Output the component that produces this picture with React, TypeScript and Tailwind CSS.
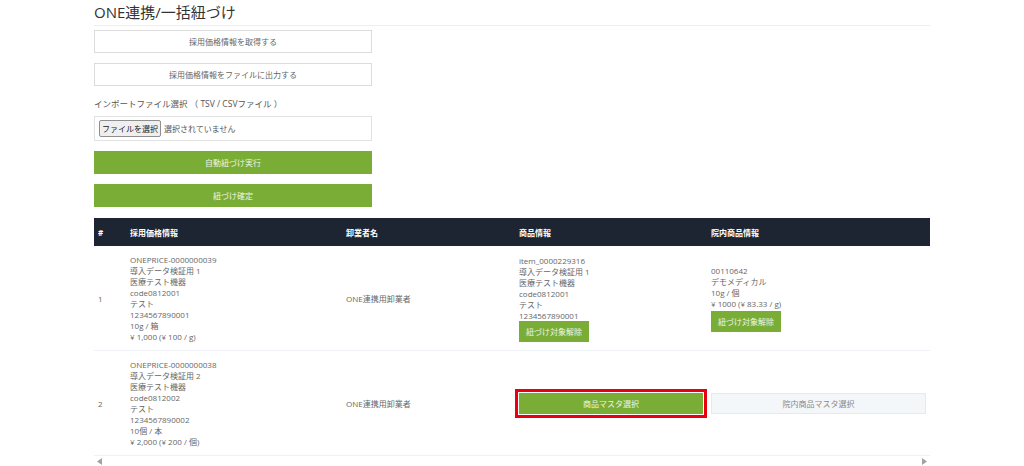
import React from "react";

const font = { fontFamily: '"Open Sans", "Noto Sans CJK JP", sans-serif' };

type Row = {
  no: number;
  price: string[];
  vendor: string;
  item: string[] | null;
  inHouse: string[] | null;
};

const rows: Row[] = [
  {
    no: 1,
    price: [
      "ONEPRICE-0000000039",
      "導入データ検証用 1",
      "医療テスト機器",
      "code0812001",
      "テスト",
      "1234567890001",
      "10g / 箱",
      "¥ 1,000 (¥ 100 / g)",
    ],
    vendor: "ONE連携用卸業者",
    item: [
      "item_0000229316",
      "導入データ検証用 1",
      "医療テスト機器",
      "code0812001",
      "テスト",
      "1234567890001",
    ],
    inHouse: ["00110642", "デモメディカル", "10g / 個", "¥ 1000 (¥ 83.33 / g)"],
  },
  {
    no: 2,
    price: [
      "ONEPRICE-0000000038",
      "導入データ検証用 2",
      "医療テスト機器",
      "code0812002",
      "テスト",
      "1234567890002",
      "10個 / 本",
      "¥ 2,000 (¥ 200 / 個)",
    ],
    vendor: "ONE連携用卸業者",
    item: null,
    inHouse: null,
  },
];

function Lines({ lines }: { lines: string[] }) {
  return (
    <div>
      {lines.map((l, i) => (
        <div key={i} className="whitespace-nowrap">
          {l}
        </div>
      ))}
    </div>
  );
}

function UnlinkButton() {
  return (
    <button className="inline-block bg-[#7aad36] text-[#eef5e4] px-[7px] py-[5px] leading-[11px]">
      紐づけ対象解除
    </button>
  );
}

export default function App() {
  return (
    <main className="min-h-screen bg-white text-[#666] text-[8px] leading-[11px]" style={font}>
      <div className="mx-auto w-[836px]">
        {/* === Title === */}
        <h1 className="pt-[4px] pb-[4px] text-[15px] leading-[17px] text-[#333] border-b border-[#eeeeee]">
          ONE連携/一括紐づけ
        </h1>

        {/* === Controls === */}
        <div className="w-[278px] pt-[4px]">
          <button className="w-full h-[23px] border border-[#dcdcdc] bg-white text-[#666]">
            採用価格情報を取得する
          </button>
          <button className="mt-[10px] w-full h-[23px] border border-[#dcdcdc] bg-white text-[#666]">
            採用価格情報をファイルに出力する
          </button>
          <div className="mt-[12px] text-[8.5px] leading-[11px] text-[#555]">
            インポートファイル選択 （ TSV / CSVファイル ）
          </div>
          <div className="mt-[7px] h-[25px] border border-[#e2e2e2] flex items-center pl-[4px] gap-[3px] text-[8px]">
            <span className="px-[2px] py-[2px] border border-[#8f8f8f] rounded-[2px] bg-[#efefef] text-[#222]">
              ファイルを選択
            </span>
            <span className="text-[#555]">選択されていません</span>
          </div>
          <button className="mt-[10px] w-full h-[23px] bg-[#7aad36] text-[#eef5e4]">
            自動紐づけ実行
          </button>
          <button className="mt-[10px] w-full h-[23px] bg-[#7aad36] text-[#eef5e4]">
            紐づけ確定
          </button>
        </div>

        {/* === Table === */}
        <table className="mt-[11px] w-full border-collapse table-fixed">
          <colgroup>
            <col className="w-[32px]" />
            <col className="w-[216px]" />
            <col className="w-[173px]" />
            <col className="w-[192px]" />
            <col className="w-[223px]" />
          </colgroup>
          <thead>
            <tr className="bg-[#1e2532] text-white h-[28px]">
              <th className="text-left font-bold px-[4px]">#</th>
              <th className="text-left font-bold px-[4px]">採用価格情報</th>
              <th className="text-left font-bold px-[4px]">卸業者名</th>
              <th className="text-left font-bold px-[4px]">商品情報</th>
              <th className="text-left font-bold px-[4px]">院内商品情報</th>
            </tr>
          </thead>
          <tbody>
            {rows.map((r) => (
              <tr key={r.no} className="border-b border-[#eef1f5]">
                <td className="px-[4px] py-[8px] align-middle">{r.no}</td>
                <td className="px-[4px] py-[8px] align-middle">
                  <Lines lines={r.price} />
                </td>
                <td className="px-[4px] py-[8px] align-middle">{r.vendor}</td>
                <td className="px-[4px] py-[8px] align-middle">
                  {r.item ? (
                    <>
                      <Lines lines={r.item} />
                      <UnlinkButton />
                    </>
                  ) : (
                    <button className="w-full h-[21px] bg-[#7aad36] text-[#eef5e4] outline-solid outline-[3px] outline-[#e60012] outline-offset-1">
                      商品マスタ選択
                    </button>
                  )}
                </td>
                <td className="px-[4px] py-[8px] align-middle">
                  {r.inHouse ? (
                    <>
                      <Lines lines={r.inHouse} />
                      <div className="mt-[2px]">
                        <UnlinkButton />
                      </div>
                    </>
                  ) : (
                    <button className="w-full h-[21px] bg-[#f4f7fa] border border-[#e6eaef] text-[#888]">
                      院内商品マスタ選択
                    </button>
                  )}
                </td>
              </tr>
            ))}
          </tbody>
        </table>

        {/* === Scroll arrows === */}
        <div className="flex justify-between items-center h-[10px] px-[3px]">
          <svg width="6" height="7" viewBox="0 0 6 7">
            <path d="M5 0 L0 3.5 L5 7 Z" fill="#a3a3a3" />
          </svg>
          <svg width="6" height="7" viewBox="0 0 6 7">
            <path d="M1 0 L6 3.5 L1 7 Z" fill="#a3a3a3" />
          </svg>
        </div>
      </div>
    </main>
  );
}
